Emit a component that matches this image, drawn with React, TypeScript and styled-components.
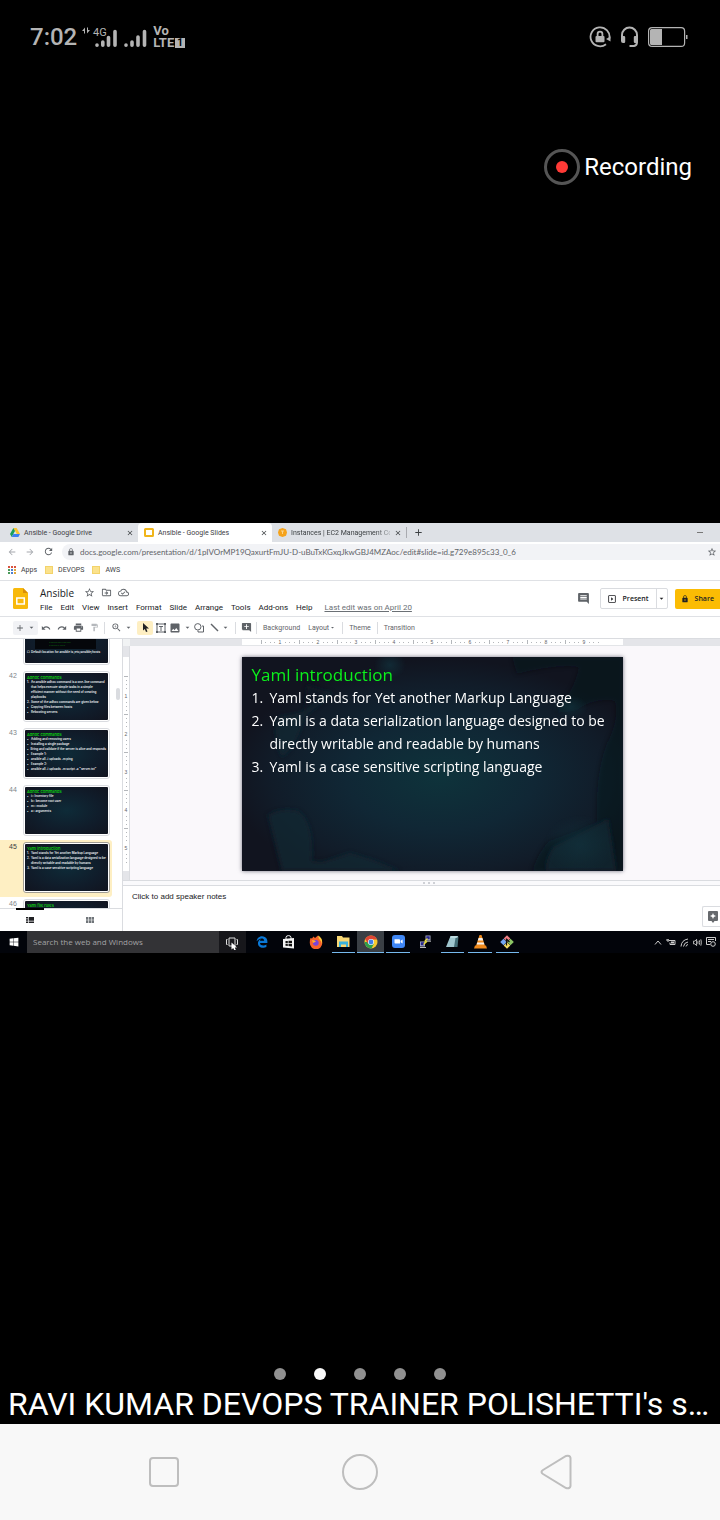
import React from "react";
import styled, { createGlobalStyle, css } from "styled-components";
import {
  MdArrowBack, MdArrowForward, MdRefresh, MdLock, MdStarBorder, MdOutlineDriveFileMove, MdOutlineCloudDone,
  MdUndo, MdRedo, MdPrint, MdFormatPaint, MdZoomIn, MdImage, MdComment, MdArrowDropDown, MdClose, MdAdd,
  MdOutlineSlideshow, MdAddComment,
} from "react-icons/md";
import { FaEdgeLegacy, FaWindows } from "react-icons/fa6";

const GlobalStyle = createGlobalStyle`
  * { box-sizing: border-box; }
  html, body { margin: 0; background: #000; }
  button, input { font: inherit; color: inherit; border: 0; padding: 0; margin: 0; background: none; outline: 0; }
  button { cursor: pointer; }
  svg { display: block; flex: none; }
`;

const ui = `Roboto, "Liberation Sans", sans-serif`;
const arial = `"Liberation Sans", Arial, sans-serif`;
const segoe = `"Open Sans", "Noto Sans", sans-serif`;

const Phone = styled.div`
  min-height: 100vh;
  display: flex;
  flex-direction: column;
  background: #000;
  color: #fff;
  font-family: ${ui};
`;

/* ---------- phone chrome ---------- */
const StatusBar = styled.header`
  display: flex;
  align-items: center;
  height: 74px;
  padding: 0 32px 0 30px;
  color: #b4b4b4;
`;
const Clock = styled.span`
  font-size: 24px;
  font-weight: 500;
  line-height: 28px;
`;
const Network = styled.div`
  display: flex;
  align-items: flex-end;
  gap: 7px;
  margin-left: 5px;
`;
const Volte = styled.div`
  display: flex;
  flex-direction: column;
  margin-left: -1px;
  font-size: 13px;
  font-weight: 700;
  line-height: 12px;
`;
const VolteLine = styled.span`
  display: flex;
  align-items: center;
  gap: 1px;
`;
const SimBadge = styled.span`
  width: 10px;
  height: 10px;
  background: #b4b4b4;
  color: #000;
  font-size: 10px;
  line-height: 10px;
  text-align: center;
`;
const StatusIcons = styled.div`
  display: flex;
  align-items: center;
  gap: 9px;
  margin-left: auto;
`;
const Recording = styled.div`
  display: flex;
  align-items: center;
  align-self: flex-end;
  gap: 4px;
  margin: 74px 28px 337px 0;
  font-size: 24px;
  line-height: 38px;
`;
const Dots = styled.nav`
  display: flex;
  justify-content: center;
  gap: 28px;
  margin-top: auto;
  padding-bottom: 4px;
`;
const Dot = styled.button<{ $on?: boolean }>`
  width: 12px;
  height: 12px;
  border-radius: 50%;
  background: ${(p) => (p.$on ? "#fafafa" : "#919191")};
`;
const Caption = styled.p`
  margin: 0;
  padding: 0 8px;
  font-size: 32px;
  line-height: 40px;
  white-space: nowrap;
`;
const NavBar = styled.nav`
  display: flex;
  justify-content: center;
  align-items: center;
  gap: 156px;
  height: 96px;
  background: #f8f8f8;
`;

/* ---------- shared desktop ---------- */
const Desktop = styled.main`
  display: flex;
  flex-direction: column;
  overflow: hidden;
  background: #fff;
  color: #3c4043;
`;

const TabStrip = styled.div`
  display: flex;
  align-items: center;
  height: 19px;
  background: #dee1e6;
  font: 7px/10px ${ui};
`;
const Tab = styled.div<{ $active?: boolean }>`
  display: flex;
  align-items: center;
  gap: 4px;
  width: 134px;
  height: 19px;
  padding: 0 4px 0 6px;
  border-radius: 4px 4px 0 0;
  background: ${(p) => (p.$active ? "#fff" : "transparent")};
  &:first-child { width: 138px; padding-left: 10px; }
`;
const TabTitle = styled.button<{ $fade?: boolean }>`
  flex: 1;
  min-width: 0;
  white-space: nowrap;
  text-align: left;
  ${(p) => p.$fade && css`mask-image: linear-gradient(90deg, #000 85%, rgba(0, 0, 0, 0.3));`}
`;
const IconButton = styled.button`
  display: grid;
  place-items: center;
  flex: none;
`;
const NewTab = styled(IconButton)`
  height: 11px;
  padding-left: 6px;
  border-left: 1px solid #a9abb0;
`;
const WindowButton = styled(IconButton)`
  margin: 0 17px 0 auto;
`;

const AddressBar = styled.div`
  display: flex;
  align-items: center;
  gap: 8px;
  height: 19px;
  padding-left: 7px;
  color: #5f6368;
`;
const Omnibox = styled.label`
  display: flex;
  flex: 1;
  align-items: center;
  gap: 5px;
  height: 16px;
  padding: 0 3px 0 5px;
  border-radius: 8px 0 0 8px;
  background: #f2f3f6;
`;
const UrlInput = styled.input`
  flex: 1;
  min-width: 0;
  font: 8px/12px Lato, ${ui};
`;
const Bookmarks = styled.nav`
  display: flex;
  align-items: center;
  gap: 8px;
  height: 20px;
  padding: 0 8px 2px;
  border-bottom: 1px solid #dfe1e5;
  font: 7px/10px ${ui};
`;
const Bookmark = styled.a`
  display: flex;
  align-items: center;
  gap: 5px;
  color: inherit;
  text-decoration: none;
`;
const Folder = styled.span`
  width: 8px;
  height: 8px;
  border: 1px solid #f3d36a;
  background: #fbe28c;
`;

const DocHeader = styled.header`
  display: flex;
  align-items: center;
  height: 36px;
  padding-left: 13px;
  border-bottom: 1px solid #dfe1e5;
`;
const DocInfo = styled.div`
  display: flex;
  flex-direction: column;
  gap: 2px;
  margin-left: 12px;
  padding-top: 2px;
`;
const TitleRow = styled.div`
  display: flex;
  align-items: center;
  gap: 6px;
  color: #5f6368;
`;
const DocTitle = styled.h1`
  margin: 0 4px 0 0;
  color: #202124;
  font: 10px/14px ${segoe};
`;
const MenuRow = styled.nav`
  display: flex;
  gap: 8px;
  color: #202124;
  font: 8px/12px ${ui};
`;
const LastEdit = styled.a`
  margin-left: 4px;
  color: #6b7075;
`;
const HeaderActions = styled.div`
  display: flex;
  align-items: center;
  margin-left: auto;
  color: #202124;
  font: 600 7px/12px ${segoe};
`;
const SplitButton = styled.div`
  display: flex;
  height: 21px;
  margin: 0 7px 0 10px;
  border: 1px solid #dadce0;
  border-radius: 2px;
`;
const ActionButton = styled.button`
  display: flex;
  align-items: center;
  gap: 6px;
  padding: 0 7px 0 6px;
`;
const DropButton = styled(IconButton)`
  width: 11px;
  border-left: 1px solid #dadce0;
`;
const ShareButton = styled(ActionButton)`
  height: 20px;
  border-radius: 2px 0 0 2px;
  background: #fbbc04;
  padding: 0 6px;
`;

const Toolbar = styled.div`
  display: flex;
  align-items: center;
  height: 22px;
  padding-left: 13px;
  border-bottom: 1px solid #dadce0;
  color: #5f6368;
  font: 7px/12px ${ui};
`;
const Tool = styled.button<{ $w?: number; $bg?: string }>`
  display: flex;
  align-items: center;
  justify-content: center;
  gap: 2px;
  width: ${(p) => p.$w ?? 16}px;
  height: 14px;
  border-radius: 2px;
  background: ${(p) => p.$bg ?? "none"};
`;
const TextTool = styled.button`
  display: flex;
  align-items: center;
  height: 14px;
  padding: 0 4px;
`;
const Rule = styled.span`
  width: 1px;
  height: 12px;
  margin: 0 2px;
  background: #dadce0;
`;

const Workspace = styled.div`
  display: grid;
  grid-template-columns: 123px minmax(0, 1fr);
  height: 292px;
`;
const Side = styled.aside`
  display: flex;
  flex-direction: column;
  min-height: 0;
  border-right: 1px solid #dadce0;
`;
const Strip = styled.div`
  display: flex;
  flex: 1;
  justify-content: space-between;
  min-height: 0;
  overflow: hidden;
`;
const StripList = styled.ol`
  width: 112px;
  margin: -27px 0 0;
  padding: 0;
  list-style: none;
`;
const StripScroll = styled.span`
  width: 4px;
  height: 12px;
  margin: 49px 2px 0 0;
  border-radius: 2px;
  background: #dadce0;
`;
const StripItem = styled.li<{ $selected?: boolean }>`
  display: flex;
  align-items: flex-start;
  height: 57px;
  padding: 2px 0 0 9px;
  border-radius: 0 3px 3px 0;
  background: ${(p) => (p.$selected ? "#feefc3" : "none")};
  color: ${(p) => (p.$selected ? "#3c4043" : "#80868b")};
  font: 7px/9px ${arial};
`;
const StripNumber = styled.span`
  width: 14px;
`;
const ThumbFrame = styled.div<{ $selected?: boolean }>`
  width: 87px;
  height: 51px;
  padding: 1px;
  border: 1px solid ${(p) => (p.$selected ? "#a09c92" : "#dadce0")};
  border-radius: 3px;
  background: #fff;
`;
const ThumbSlide = styled.div`
  height: 47px;
  padding: 2px 2px 0;
  overflow: hidden;
  border-radius: 1px;
  background: radial-gradient(ellipse at 50% 50%, #0e2b38, #101c2a 60%, #11141f);
  color: #f1f4f6;
  font: 600 3px/5px Inter, ${segoe};
  white-space: nowrap;
`;
const ThumbTitle = styled.div`
  color: #0be00b;
  font-size: 4px;
  font-weight: 500;
`;
const ThumbLine = styled.div`
  display: flex;
`;
const ThumbMark = styled.span`
  width: 4px;
`;
const CodeBlock = styled.div`
  height: 31px;
  margin: 0 10px 1px 8px;
  padding: 23px 0 0 14px;
  background: #05070b;
  color: #15a015;
  line-height: 3px;
`;
const ViewBar = styled.div`
  display: grid;
  grid-template-columns: 60px 60px;
  height: 23px;
  border-top: 1px solid #dadce0;
`;
const ViewTab = styled.button<{ $on?: boolean }>`
  display: grid;
  place-items: center;
  margin: -1px 16px 2px;
  border-top: 2px solid ${(p) => (p.$on ? "#000" : "transparent")};
  color: ${(p) => (p.$on ? "#202124" : "#70757a")};
`;

const Editor = styled.section`
  display: grid;
  grid-template: 7px 1fr 6px 45px / 7px minmax(0, 1fr);
  min-height: 0;
`;
const RulerCorner = styled.div`
  background: #f1f3f4;
`;
const RulerTop = styled.div`
  display: flex;
  justify-content: center;
  padding-left: 14px;
  border-bottom: 1px solid #e3e5e8;
  background: #e4e5e9;
`;
const RulerSide = styled.div`
  padding: 11px 0 9px;
  border-right: 1px solid #dadce0;
  background: #e4e5e9;
`;
const ScaleRow = styled.div`
  display: grid;
  grid-template-columns: repeat(9, 38px);
  width: 381px;
  padding-left: 19px;
  background: #fff;
`;
const ScaleColumn = styled.div`
  display: grid;
  grid-template-rows: repeat(5, 38px);
  height: 100%;
  padding-top: 19px;
  background: #fff;
`;
const Inch = styled.span<{ $down?: boolean }>`
  display: flex;
  flex-direction: ${(p) => (p.$down ? "column" : "row")};
  align-items: center;
  justify-content: space-between;
  color: #5f6368;
  font: 5px/6px ${arial};
`;
const Tick = styled.i<{ $long?: boolean; $down?: boolean }>`
  width: ${(p) => (p.$down && p.$long ? 4 : 1)}px;
  height: ${(p) => (!p.$down && p.$long ? 4 : 1)}px;
  background: #b4b7bb;
`;
const Canvas = styled.div`
  display: flex;
  justify-content: center;
  align-items: flex-start;
  padding: 11px 0 0 14px;
  background: #faf8fb;
`;
const Slide = styled.article`
  display: grid;
  width: 381px;
  height: 214px;
  overflow: hidden;
  background: #11151f;
  box-shadow: 0 0 4px rgba(20, 20, 40, 0.6);
  & > * { grid-area: 1 / 1; }
`;
const SlideText = styled.div`
  z-index: 1;
  padding: 7px 10px;
  color: #fff;
  font: 14px/23px ${segoe};
`;
const SlideTitle = styled.h2`
  margin: 0;
  color: #0cf01c;
  font-size: 17px;
  font-weight: 400;
  line-height: 22px;
`;
const SlideList = styled.ol`
  margin: 0;
  padding: 0;
  list-style: none;
`;
const SlideItem = styled.li`
  display: grid;
  grid-template-columns: 18px 1fr;
`;
const Splitter = styled.div`
  grid-column: 1 / -1;
  display: flex;
  justify-content: center;
  align-items: center;
  gap: 3px;
  padding-left: 14px;
  border: solid #dadce0;
  border-width: 1px 0;
  background: #fafafc;
`;
const Grip = styled.i`
  width: 2px;
  height: 2px;
  background: #cfd1d6;
`;
const Notes = styled.div`
  grid-column: 1 / -1;
  display: flex;
  justify-content: space-between;
  padding: 5px 0 4px 9px;
  color: #202124;
  font: 8px/12px ${arial};
`;
const Explore = styled(IconButton)`
  align-self: flex-end;
  width: 18px;
  height: 21px;
  padding-left: 3px;
  border: 1px solid #dadce0;
  border-right: 0;
  border-radius: 2px 0 0 2px;
`;

const Taskbar = styled.footer`
  display: flex;
  height: 22px;
  background: #02040a;
  color: #e8e8e8;
`;
const StartButton = styled(IconButton)`
  width: 27px;
`;
const SearchBox = styled.input`
  width: 192px;
  padding: 0 6px;
  background: #333336;
  color: #a2a2a4;
  font: 8px/12px ${segoe};
  &::placeholder { color: #a2a2a4; opacity: 1; }
`;
const TaskView = styled(IconButton)`
  width: 27px;
  background: #17171b;
`;
const Apps = styled.div`
  display: grid;
  grid-template-columns: repeat(10, 1fr);
  width: 273px;
  margin-left: 2px;
`;
const AppButton = styled(IconButton)<{ $open?: boolean; $active?: boolean }>`
  margin: 0 ${(p) => (p.$active ? 0 : 2)}px;
  border-bottom: 1px solid ${(p) => (p.$open ? "#76b9ed" : "transparent")};
  background: ${(p) => (p.$active ? "#3a3f45" : "none")};
`;
const Tray = styled.div`
  display: flex;
  align-items: center;
  gap: 4px;
  margin-left: auto;
  padding-right: 4px;
`;

/* ---------- drawings ---------- */
const Signal = () => (
  <svg width="23" height="22" viewBox="0 0 23 22" stroke="#b4b4b4" strokeWidth="3.600" strokeLinecap="round">
    <path d="M2 18v.2M8 15v3.200M14 10v8.200M20.500 4.500v13.700" />
  </svg>
);
const DataSignal = () => (
  <svg width="35" height="22" viewBox="0 0 35 22" fill="#b4b4b4">
    <path d="M0 4 3 .5v6H2V4zM8 3 5 6.500v-6h1V3z" />
    <text x="11" y="9" fontSize="11" fontFamily="Roboto, sans-serif">4G</text>
    <path d="M15 18v.2M20.800 15v3.200M26.500 10.500v7.700M33 4.500v13.700" stroke="#b4b4b4" strokeWidth="3.600" strokeLinecap="round" />
  </svg>
);
const RotationLock = () => (
  <svg width="22" height="22" viewBox="0 0 22 22" fill="none" stroke="#b4b4b4" strokeWidth="1.800">
    <path d="M17 18.200A9.500 9.500 0 1 1 20.400 12.500" />
    <path d="M21.500 10.500v5l-4.500-2.500z" fill="#b4b4b4" stroke="none" />
    <rect x="6.500" y="10" width="9" height="6.200" rx="1" fill="#b4b4b4" stroke="none" />
    <path d="M8.600 10V8a2.400 2.400 0 0 1 4.800 0v2" />
  </svg>
);
const Headset = () => (
  <svg width="19" height="22" viewBox="0 0 19 22" fill="none" stroke="#b4b4b4" strokeWidth="2">
    <path d="M2 13V9a7.500 7.500 0 0 1 15 0v7q0 3.500-3 4H9.500" />
    <path d="M1 10h3q1.200 0 1.200 1.200v4.600Q5.200 17 4 17H3q-2 0-2-2zM18 10h-3q-1.200 0-1.200 1.200v4.600q0 1.200 1.200 1.200h1q2 0 2-2z" fill="#b4b4b4" stroke="none" />
  </svg>
);
const Battery = () => (
  <svg width="40" height="20" viewBox="0 0 40 20">
    <rect x=".6" y=".6" width="36" height="18.800" rx="3.500" fill="none" stroke="#b4b4b4" strokeWidth="1.200" />
    <path d="M3.500 2H14v16H3.500A1.500 1.500 0 0 1 2 16.500v-13A1.500 1.500 0 0 1 3.500 2zM38 8h1.500v4H38z" fill="#b4b4b4" />
  </svg>
);
const DriveLogo = () => (
  <svg width="10" height="9" viewBox="0 0 10 9">
    <path d="M3.400 0h3.200L10 6H6.800z" fill="#fbc52d" />
    <path d="M3.400 0 5 3 1.700 9 0 6z" fill="#1a9f5c" />
    <path d="M3.400 6H10L8.400 9H1.700z" fill="#3d7ff0" />
  </svg>
);
const SlidesTabLogo = () => (
  <svg width="10" height="9" viewBox="0 0 10 9">
    <rect x="1" y="1" width="8" height="7" rx=".5" fill="#fff" stroke="#f0b51b" strokeWidth="2" />
  </svg>
);
const Ec2Logo = () => (
  <svg width="9" height="9" viewBox="0 0 9 9">
    <path d="M1 1.200 4.500 0 8 1.200 9 4.500 8 7.800 4.500 9 1 7.800 0 4.500z" fill="#f5a31c" />
    <path d="M3 3h3M4.500 3v3" stroke="#fbd48c" />
  </svg>
);
const SlidesLogo = () => (
  <svg width="15" height="21" viewBox="0 0 15 21">
    <path d="M1.500 0H10l5 5v14.500q0 1.500-1.500 1.500h-12Q0 21 0 19.500v-18Q0 0 1.500 0z" fill="#f8b90b" />
    <path d="M10 0v5h5z" fill="#d98f08" />
    <rect x="3.800" y="10" width="7.500" height="6" fill="none" stroke="#fff" strokeWidth="1.500" />
  </svg>
);
const AppsGrid = () => (
  <svg width="8" height="8" viewBox="0 0 8 8">
    {["#d9533f", "#d9533f", "#d9533f", "#4b9a5a", "#4b7fd1", "#e0a83c", "#4b9a5a", "#4b7fd1", "#e0a83c"].map((c, i) => (
      <rect key={i} x={(i % 3) * 3} y={Math.floor(i / 3) * 3} width="2" height="2" fill={c} />
    ))}
  </svg>
);
const Cursor = () => (
  <svg width="9" height="9" viewBox="0 0 9 9" fill="#202124">
    <path d="M2 0v7.500l1.800-1.600L5 9l1.500-.6-1.300-3H8z" />
  </svg>
);
const TextBoxIcon = () => (
  <svg width="10" height="10" viewBox="0 0 10 10" fill="none" stroke="#5f6368">
    <rect x="1" y="1" width="8" height="8" />
    <path d="M3 3.500h4M5 3.500V8" />
    <path d="M0 0h2v2H0zM8 0h2v2H8zM0 8h2v2H0zM8 8h2v2H8z" fill="#5f6368" stroke="none" />
  </svg>
);
const ShapesIcon = () => (
  <svg width="10" height="10" viewBox="0 0 10 10" fill="none" stroke="#5f6368">
    <circle cx="3.800" cy="3.800" r="3.200" />
    <path d="M8 3h1.500v6H4V7.500" />
  </svg>
);
const LineIcon = () => (
  <svg width="9" height="9" viewBox="0 0 9 9" stroke="#5f6368" strokeWidth="1.400"><path d="M1 1l7 7" /></svg>
);
const FilmstripIcon = () => (
  <svg width="8" height="6" viewBox="0 0 8 6" fill="currentColor">
    <path d="M0 0h2v1.500H0zM0 2.200h2v1.500H0zM0 4.500h2V6H0zM2.700 0H8v3.700H2.700zM2.700 4.500H8V6H2.700z" />
  </svg>
);
const GridIcon = () => (
  <svg width="8" height="6" viewBox="0 0 8 6" fill="currentColor">
    <path d="M0 0h2.300v2.700H0zM2.900 0h2.300v2.700H2.900zM5.700 0H8v2.700H5.700zM0 3.300h2.300V6H0zM2.900 3.300h2.300V6H2.900zM5.700 3.300H8V6H5.700z" />
  </svg>
);
const ExploreIcon = () => (
  <svg width="10" height="12" viewBox="0 0 10 12">
    <path d="M1 0h8q1 0 1 1v8q0 1-1 1H6.500L5 12 3.500 10H1Q0 10 0 9V1Q0 0 1 0z" fill="#66696d" />
    <path d="M5 2l.9 2.100L8 5l-2.100.9L5 8l-.9-2.100L2 5l2.100-.9z" fill="#fff" />
  </svg>
);
const SlideArt = () => (
  <svg width="100%" height="100%" viewBox="0 0 381 214" preserveAspectRatio="none">
    <defs>
      <radialGradient id="glow" cx=".52" cy=".56" r=".55">
        <stop offset="0" stopColor="#0e333b" />
        <stop offset=".45" stopColor="#102735" />
        <stop offset=".8" stopColor="#111c29" />
        <stop offset="1" stopColor="#11141f" />
      </radialGradient>
      <radialGradient id="corner">
        <stop offset="0" stopColor="#12303b" stopOpacity=".8" />
        <stop offset="1" stopColor="#12303b" stopOpacity="0" />
      </radialGradient>
      <filter id="soft"><feGaussianBlur stdDeviation="2" /></filter>
    </defs>
    <rect width="381" height="214" fill="url(#glow)" />
    <g filter="url(#soft)">
      <path d="M36 60q24-4 26-6l4-26q14 6 25 8L62 60q-6 28-22 40-10-20-4-40z" fill="#122a35" opacity=".7" />
      <path d="M65 28q12 6 19 8L62 55z" fill="#0f141e" opacity=".8" />
      <path d="M275 17q38-10 62-7-4 22-24 46l20-2q20-14 40-10 4 20-8 42-12 30-10 80l-48 18q-10 10-17 30h91V0H270z" fill="#10141f" opacity=".4" />
      <path d="M26 158q14-8 30-4 16 10 14 50l10 1 28-9q24 6 50 18H40z" fill="#122833" opacity=".7" />
      <path d="M312 190l54-28 8 52h-70q0-14 8-24z" fill="#122d39" opacity=".6" />
    </g>
    <ellipse cx="148" cy="8" rx="16" ry="14" fill="url(#corner)" />
    <ellipse cx="338" cy="188" rx="36" ry="30" fill="url(#corner)" />
    <ellipse cx="328" cy="50" rx="18" ry="12" fill="url(#corner)" />
  </svg>
);

const appIcons: Record<string, React.ReactNode> = {
  Edge: <FaEdgeLegacy size={12} color="#0a78d6" />,
  Store: (
    <svg width="13" height="14" viewBox="0 0 13 14">
      <path d="M1 4l11-1v10.500L1 12.500z" fill="#f4f4f4" />
      <path d="M4 4V2.500Q4 .6 6.500.6T9 2.500V4" fill="none" stroke="#f4f4f4" />
      <path d="M3.500 6h2.300v2.200H3.500zM6.500 5.800H10v2.400H6.500zM3.500 8.900h2.300V11l-2.300-.2zM6.500 8.900H10v2.500L6.500 11z" fill="#111" />
    </svg>
  ),
  Firefox: (
    <svg width="14" height="14" viewBox="0 0 14 14">
      <path d="M1.500 3l1.500.5L4.500 1.500 6 3 9 .5 10 3q3.500 2 3.300 5A6.200 6.200 0 0 1 .8 8Q.7 5 1.500 3z" fill="#f8632a" />
      <path d="M9 .5q0 3 2 4.500t1 4q2-3 .3-5.500T9 .5z" fill="#ffc83a" />
      <circle cx="6.800" cy="7.800" r="2.900" fill="#7a42d8" />
      <path d="M3 5q3 0 4 1.500L4 8z" fill="#ffb02e" />
    </svg>
  ),
  "File Explorer": (
    <svg width="13" height="11" viewBox="0 0 13 11">
      <path d="M0 0h5l1 1.500h6.500V11H0z" fill="#f8d775" />
      <path d="M2 5.500h9V11H9V8.500H4V11H2z" fill="#3bb2dc" />
    </svg>
  ),
  Chrome: (
    <svg width="14" height="14" viewBox="0 0 14 14">
      <circle cx="7" cy="7" r="6.500" fill="#f7c92d" />
      <path d="M7 7H.7A6.500 6.500 0 0 0 7.500 13.500L10 8.500z" fill="#2ca04c" />
      <path d="M1.200 4A6.500 6.500 0 0 1 13 4.500H7L3.800 8.500z" fill="#df4535" />
      <circle cx="7" cy="7" r="3" fill="#fff" />
      <circle cx="7" cy="7" r="2.400" fill="#3f7ee8" />
    </svg>
  ),
  Zoom: (
    <svg width="13" height="13" viewBox="0 0 13 13">
      <rect width="13" height="13" rx="3" fill="#3f86f4" />
      <path d="M2.500 4.300h4.700q.8 0 .8.800v3.500H3.300q-.8 0-.8-.8zM8.600 5.800l2-1.400v4.200l-2-1.400z" fill="#fff" />
    </svg>
  ),
  PuTTY: (
    <svg width="13" height="13" viewBox="0 0 13 13">
      <path d="M6.500.5h5v5h-5zM1 6.500h5v5H1z" fill="#a9abc4" />
      <path d="M7.300 1.300h3.400v3H7.300zM1.800 7.300h3.400v3H1.800z" fill="#25268e" />
      <path d="M1 12.500h6M7 6.200h5" stroke="#b9b9b9" />
      <path d="M8.500 3.500 6 6l1.500.8L4.500 9.500" fill="none" stroke="#f2e439" strokeWidth="1.200" />
    </svg>
  ),
  Notepad: (
    <svg width="13" height="12" viewBox="0 0 13 12">
      <path d="M4.500 0h7.500L10 11H0z" fill="#9fc6ce" />
      <path d="M9.500 2l3-1.500L11.500 11H8z" fill="#436d76" />
      <path d="M4.500 1h7" stroke="#d9eef2" />
    </svg>
  ),
  VLC: (
    <svg width="13" height="14" viewBox="0 0 13 14">
      <path d="M5.500 0h2L11 11H2z" fill="#f08a1c" />
      <path d="M4.600 3h3.800l.8 2.500H3.800zM3.200 7.500h6.600l.6 2H2.600z" fill="#f4efe9" />
      <path d="M1 10.500h11l1 3H0z" fill="#f08a1c" />
    </svg>
  ),
  "Git Bash": (
    <svg width="14" height="14" viewBox="0 0 14 14">
      <path d="M7 .2 10.300 3.500 7 6.800 3.700 3.500z" fill="#ef7d83" />
      <path d="M3.500 3.700 6.800 7l-3.300 3.300L.2 7z" fill="#74a7f2" />
      <path d="M10.500 3.700 13.800 7l-3.300 3.300L7.200 7z" fill="#8cc665" />
      <path d="M7 7.200l3.300 3.300L7 13.800l-3.300-3.300z" fill="#f2dc63" />
      <path d="M6.500 3.500v7M6.500 4l3 3" stroke="#111" strokeWidth="1.200" fill="none" />
    </svg>
  ),
};

/* ---------- data ---------- */
const url = "docs.google.com/presentation/d/1pIVOrMP19QaxurtFmJU-D-uBuTxKGxqJkwGBJ4MZAoc/edit#slide=id.g729e895c33_0_6";
const menus = ["File", "Edit", "View", "Insert", "Format", "Slide", "Arrange", "Tools", "Add-ons", "Help"];
const openApps = ["File Explorer", "Chrome", "Zoom", "Notepad", "VLC", "Git Bash"];

type Thumb = { n?: number; title?: string; code?: boolean; lines: [string, string][] };
const thumbs: Thumb[] = [
  { code: true, lines: [["☐", "Default location for ansible is /etc/ansible/hosts"]] },
  {
    n: 42, title: "Adhoc commands",
    lines: [
      ["1.", "An ansible adhoc command is a one-line command"], ["", "that helps execute simple tasks in a simple"],
      ["", "efficient manner without the need of creating"], ["", "playbooks"],
      ["2.", "Some of the adhoc commands are given below"], ["•", "Copying files between hosts"], ["•", "Rebooting servers"],
    ],
  },
  {
    n: 43, title: "Adhoc commands",
    lines: [
      ["•", "Adding and removing users"], ["•", "Installing a single package"],
      ["•", "Bring and validate if the server is alive and responds"], ["•", "Example 1:"],
      ["•", "ansible all -i uploads -m ping"], ["•", "Example 2:"], ["•", "ansible all -i uploads -m script -a \"server.txt\""],
    ],
  },
  { n: 44, title: "Adhoc commands", lines: [["•", "i= Inventory file"], ["•", "b= become root user"], ["•", "m= module"], ["•", "a= arguments"]] },
  {
    n: 45, title: "Yaml introduction",
    lines: [
      ["1.", "Yaml stands for Yet another Markup Language"], ["2.", "Yaml is a data serialization language designed to be"],
      ["", "directly writable and readable by humans"], ["3.", "Yaml is a case sensitive scripting language"],
    ],
  },
  { n: 46, title: "Yaml file rules", lines: [] },
];

const points = [
  "Yaml stands for Yet another Markup Language",
  "Yaml is a data serialization language designed to be directly writable and readable by humans",
  "Yaml is a case sensitive scripting language",
];

const InchMarks = ({ n, down }: { n: number; down?: boolean }) => (
  <Inch $down={down}>
    <Tick $long $down={down} /><Tick $down={down} /><Tick $down={down} /><Tick $down={down} />
    {n}
    <Tick $down={down} /><Tick $down={down} /><Tick $down={down} />
    <span />
  </Inch>
);

const Drop = () => <MdArrowDropDown size={9} />;
const CloseTab = () => <IconButton aria-label="Close tab"><MdClose size={8} /></IconButton>;

export default function App() {
  return (
    <Phone>
      <GlobalStyle />
      <StatusBar>
        <Clock>7:02</Clock>
        <Network>
          <DataSignal />
          <Signal />
          <Volte>
            <span>Vo</span>
            <VolteLine>LTE<SimBadge>1</SimBadge></VolteLine>
          </Volte>
        </Network>
        <StatusIcons><RotationLock /><Headset /><Battery /></StatusIcons>
      </StatusBar>

      <Recording>
        <svg width="36" height="36" viewBox="0 0 36 36">
          <circle cx="18" cy="18" r="16.500" fill="none" stroke="#555" strokeWidth="3" />
          <circle cx="18" cy="18" r="6" fill="#ff3a36" />
        </svg>
        Recording
      </Recording>

      <Desktop>
        <TabStrip>
          <Tab><DriveLogo /><TabTitle>Ansible - Google Drive</TabTitle><CloseTab /></Tab>
          <Tab $active><SlidesTabLogo /><TabTitle>Ansible - Google Slides</TabTitle><CloseTab /></Tab>
          <Tab><Ec2Logo /><TabTitle $fade>Instances | EC2 Management Co</TabTitle><CloseTab /></Tab>
          <NewTab aria-label="New tab"><MdAdd size={11} /></NewTab>
          <WindowButton aria-label="Minimize"><svg width="6" height="1"><rect width="6" height="1" fill="#777" /></svg></WindowButton>
        </TabStrip>

        <AddressBar>
          <IconButton aria-label="Back"><MdArrowBack size={10} color="#a5a8ad" /></IconButton>
          <IconButton aria-label="Forward"><MdArrowForward size={10} color="#a5a8ad" /></IconButton>
          <IconButton aria-label="Reload"><MdRefresh size={11} /></IconButton>
          <Omnibox>
            <MdLock size={8} />
            <UrlInput aria-label="Address" defaultValue={url} />
            <MdStarBorder size={10} />
          </Omnibox>
        </AddressBar>

        <Bookmarks>
          <Bookmark href="#apps"><AppsGrid />Apps</Bookmark>
          <Bookmark href="#devops"><Folder />DEVOPS</Bookmark>
          <Bookmark href="#aws"><Folder />AWS</Bookmark>
        </Bookmarks>

        <DocHeader>
          <SlidesLogo />
          <DocInfo>
            <TitleRow>
              <DocTitle>Ansible</DocTitle>
              <MdStarBorder size={11} /><MdOutlineDriveFileMove size={11} /><MdOutlineCloudDone size={11} />
            </TitleRow>
            <MenuRow>
              {menus.map((m) => <button key={m}>{m}</button>)}
              <LastEdit href="#history">Last edit was on April 20</LastEdit>
            </MenuRow>
          </DocInfo>
          <HeaderActions>
            <IconButton aria-label="Comments"><MdComment size={13} color="#5f6368" /></IconButton>
            <SplitButton>
              <ActionButton><MdOutlineSlideshow size={10} />Present</ActionButton>
              <DropButton aria-label="Present options"><Drop /></DropButton>
            </SplitButton>
            <ShareButton><MdLock size={8} />Share</ShareButton>
          </HeaderActions>
        </DocHeader>

        <Toolbar>
          <Tool $w={25} $bg="#f1f2f5" aria-label="New slide"><MdAdd size={10} /><Drop /></Tool>
          <Tool aria-label="Undo"><MdUndo size={10} /></Tool>
          <Tool aria-label="Redo"><MdRedo size={10} /></Tool>
          <Tool aria-label="Print"><MdPrint size={11} /></Tool>
          <Tool aria-label="Paint format"><MdFormatPaint size={9} color="#b5b8bc" /></Tool>
          <Rule />
          <Tool $w={30} aria-label="Zoom"><MdZoomIn size={11} /><Drop /></Tool>
          <Tool $w={16} $bg="#feefc3" aria-label="Select"><Cursor /></Tool>
          <Tool aria-label="Text box"><TextBoxIcon /></Tool>
          <Tool $w={22} aria-label="Image"><MdImage size={12} /><Drop /></Tool>
          <Tool aria-label="Shape"><ShapesIcon /></Tool>
          <Tool $w={26} aria-label="Line"><LineIcon /><Drop /></Tool>
          <Rule />
          <Tool aria-label="Add comment"><MdAddComment size={11} /></Tool>
          <Rule />
          <TextTool>Background</TextTool>
          <TextTool>Layout<MdArrowDropDown size={7} /></TextTool>
          <Rule />
          <TextTool>Theme</TextTool>
          <Rule />
          <TextTool>Transition</TextTool>
        </Toolbar>

        <Workspace>
          <Side>
            <Strip>
              <StripList>
                {thumbs.map((t, k) => (
                  <StripItem key={k} $selected={t.n === 45}>
                    <StripNumber>{t.n}</StripNumber>
                    <ThumbFrame $selected={t.n === 45}>
                      <ThumbSlide>
                        {t.code && <CodeBlock>--------- ------<br />------- ----</CodeBlock>}
                        {t.title && <ThumbTitle>{t.title}</ThumbTitle>}
                        {t.lines.map(([mark, text], i) => (
                          <ThumbLine key={i}><ThumbMark>{mark}</ThumbMark>{text}</ThumbLine>
                        ))}
                      </ThumbSlide>
                    </ThumbFrame>
                  </StripItem>
                ))}
              </StripList>
              <StripScroll />
            </Strip>
            <ViewBar>
              <ViewTab $on aria-label="Filmstrip view"><FilmstripIcon /></ViewTab>
              <ViewTab aria-label="Grid view"><GridIcon /></ViewTab>
            </ViewBar>
          </Side>

          <Editor>
            <RulerCorner />
            <RulerTop><ScaleRow>{[1, 2, 3, 4, 5, 6, 7, 8, 9].map((n) => <InchMarks key={n} n={n} />)}</ScaleRow></RulerTop>
            <RulerSide><ScaleColumn>{[1, 2, 3, 4, 5].map((n) => <InchMarks key={n} n={n} down />)}</ScaleColumn></RulerSide>
            <Canvas>
              <Slide>
                <SlideArt />
                <SlideText>
                  <SlideTitle>Yaml introduction</SlideTitle>
                  <SlideList>
                    {points.map((p, i) => <SlideItem key={p}><span>{i + 1}.</span><span>{p}</span></SlideItem>)}
                  </SlideList>
                </SlideText>
              </Slide>
            </Canvas>
            <Splitter><Grip /><Grip /><Grip /></Splitter>
            <Notes>
              Click to add speaker notes
              <Explore aria-label="Explore"><ExploreIcon /></Explore>
            </Notes>
          </Editor>
        </Workspace>

        <Taskbar>
          <StartButton aria-label="Start"><FaWindows size={10} color="#fff" /></StartButton>
          <SearchBox aria-label="Search" placeholder="Search the web and Windows" />
          <TaskView aria-label="Task view">
            <svg width="13" height="16" viewBox="0 0 13 16">
              <path d="M3 4h6v8H3zM1.500 5.500h-1v5h1M10.500 5.500h1v5h-1" fill="none" stroke="#ddd" />
              <path d="M5.500 8.500v7l1.700-1.500 1 2h1.600l-1-2.500h2.200z" fill="#fff" />
            </svg>
          </TaskView>
          <Apps>
            {Object.entries(appIcons).map(([name, icon]) => (
              <AppButton key={name} aria-label={name} $open={openApps.includes(name)} $active={name === "Chrome"}>{icon}</AppButton>
            ))}
          </Apps>
          <Tray>
            <svg width="8" height="9" viewBox="0 0 8 9" fill="none" stroke="#ccc"><path d="M1 6.500 4 3 7 6.500" /></svg>
            <svg width="10" height="9" viewBox="0 0 10 9" fill="none" stroke="#ccc"><path d="M3 2.500h6v4H4v-2M0 2h3M2 1v3" /><path d="M5 3.500h3v2H5z" fill="#ccc" stroke="none" /></svg>
            <svg width="9" height="9" viewBox="0 0 9 9" fill="none" stroke="#ccc"><path d="M1 8.500Q1.500 2 8 1M3.500 8.500Q4 4.500 8 4M6 8.500Q6 7 8 6.500" /></svg>
            <svg width="9" height="9" viewBox="0 0 10 9" fill="none" stroke="#ccc"><path d="M.5 3v3H2l2 2V1L2 3zM5.500 3v3M7 2q1 2.500 0 5M8.700 1q1.300 3.500 0 7" /></svg>
            <svg width="10" height="10" viewBox="0 0 10 10" fill="none" stroke="#ccc"><path d="M4 7.500H.5v-7h9V4M2 2.500h6M2 4.500h3" /><circle cx="7" cy="7" r="2.300" /></svg>
          </Tray>
        </Taskbar>
      </Desktop>

      <Dots aria-label="Pages">
        {[0, 1, 2, 3, 4].map((i) => <Dot key={i} $on={i === 1} aria-label={`Page ${i + 1}`} />)}
      </Dots>
      <Caption>RAVI KUMAR DEVOPS TRAINER POLISHETTI's s…</Caption>
      <NavBar>
        <IconButton aria-label="Recent apps">
          <svg width="40" height="40" viewBox="0 0 40 40" fill="none" stroke="#bebebe" strokeWidth="2"><rect x="6" y="6" width="28" height="28" rx="3" /></svg>
        </IconButton>
        <IconButton aria-label="Home">
          <svg width="40" height="40" viewBox="0 0 40 40" fill="none" stroke="#bebebe" strokeWidth="2"><circle cx="20" cy="20" r="17" /></svg>
        </IconButton>
        <IconButton aria-label="Back">
          <svg width="40" height="40" viewBox="0 0 40 40" fill="none" stroke="#bebebe" strokeWidth="2"><path d="M7 18 30 4q4-1 4.500 2v28q-.5 3-4.500 2L7 22q-3-2 0-4z" /></svg>
        </IconButton>
      </NavBar>
    </Phone>
  );
}
